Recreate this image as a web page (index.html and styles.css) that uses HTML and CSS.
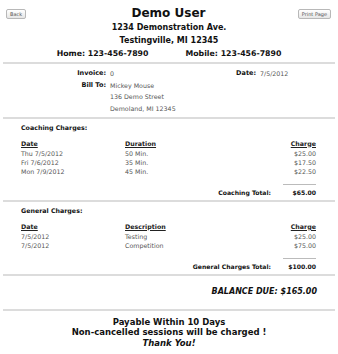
FILE: index.html
```html
<!DOCTYPE html>
<html>
<head>
<meta charset="utf-8">
<link rel="stylesheet" href="styles.css">
</head>
<body>
<div class="page">
  <header class="head">
    <div class="side left"><button class="btn">Back</button></div>
    <h1 class="name">Demo User</h1>
    <div class="side right"><button class="btn">Print Page</button></div>
  </header>
  <div class="addr">
    <div class="line">1234 Demonstration Ave.</div>
    <div class="line">Testingville, MI 12345</div>
    <div class="line phones"><span>Home: 123-456-7890</span><span>Mobile: 123-456-7890</span></div>
  </div>
  <div class="rule"></div>

  <div class="info">
    <div class="lbl">Invoice:</div><div class="val">0</div><div class="lbl2">Date:</div><div class="val">7/5/2012</div>
    <div class="lbl">Bill To:</div><div class="val wide">Mickey Mouse</div>
    <div class="lbl"></div><div class="val wide">136 Demo Street</div>
    <div class="lbl"></div><div class="val wide">Demoland, MI 12345</div>
  </div>
  <div class="rule r2"></div>

  <section class="sec">
    <div class="sec-title">Coaching Charges:</div>
    <div class="row hdr"><span class="c1">Date</span><span class="c2">Duration</span><span class="c3">Charge</span></div>
    <div class="row"><span class="c1">Thu 7/5/2012</span><span class="c2">50 Min.</span><span class="c3">$25.00</span></div>
    <div class="row"><span class="c1">Fri 7/6/2012</span><span class="c2">35 Min.</span><span class="c3">$17.50</span></div>
    <div class="row"><span class="c1">Mon 7/9/2012</span><span class="c2">45 Min.</span><span class="c3">$22.50</span></div>
    <div class="total"><span class="t-lbl">Coaching Total:</span><span class="t-val">$65.00</span></div>
  </section>
  <div class="rule r3"></div>

  <section class="sec">
    <div class="sec-title">General Charges:</div>
    <div class="row hdr"><span class="c1">Date</span><span class="c2">Description</span><span class="c3">Charge</span></div>
    <div class="row"><span class="c1">7/5/2012</span><span class="c2">Testing</span><span class="c3">$25.00</span></div>
    <div class="row"><span class="c1">7/5/2012</span><span class="c2">Competition</span><span class="c3">$75.00</span></div>
    <div class="total"><span class="t-lbl">General Charges Total:</span><span class="t-val">$100.00</span></div>
  </section>
  <div class="rule r3"></div>

  <div class="balance">BALANCE DUE: $165.00</div>
  <div class="rule r4"></div>

  <footer class="foot">
    <div>Payable Within 10 Days</div>
    <div>Non-cancelled sessions will be charged !</div>
    <div class="thanks">Thank You!</div>
  </footer>
</div>
</body>
</html>
```
FILE: styles.css
```css
* { box-sizing: border-box; }
html, body { margin: 0; padding: 0; background: #fff; }
body {
  font-family: "DejaVu Sans", Verdana, sans-serif;
  color: #111;
  width: 338px;
  height: 354px;
  overflow: hidden;
}
.page { width: 338px; }

.head {
  display: grid;
  grid-template-columns: 1fr auto 1fr;
  align-items: start;
  padding: 6px 7px 0 6px;
}
.side { display: flex; padding-top: 3px; }
.side.right { justify-content: flex-end; }
.btn {
  font-family: "DejaVu Sans", Verdana, sans-serif;
  font-size: 5px;
  line-height: 6px;
  color: #555;
  padding: 1px 3px;
  border: 1px solid #b8b8b8;
  border-radius: 2px;
  background: linear-gradient(#ffffff, #e6e6e6);
  margin: 0;
}
.name {
  margin: 0;
  font-size: 12px;
  line-height: 14px;
  font-weight: bold;
  text-align: center;
}
.addr {
  text-align: center;
  font-weight: bold;
  font-size: 8px;
  line-height: 13px;
  margin-top: 1px;
}
.phones { display: flex; justify-content: center; gap: 37px; font-size: 7.8px; }

.rule {
  height: 2px;
  background: #dcdcdc;
  margin: 2px 3px 0 3px;
}
.r2 { margin-top: 3px; }
.r3 { margin-top: 3px; }
.r4 { margin-top: 12px; }

.info {
  display: grid;
  grid-template-columns: 106px 122px 28px auto;
  padding-top: 4px;
  font-size: 6.3px;
  line-height: 11.5px;
}
.lbl { text-align: right; font-weight: bold; font-size: 6.5px; }
.lbl2 { text-align: right; font-weight: bold; font-size: 6.5px; }
.val { color: #555; padding-left: 4px; }
.val.wide { grid-column: 2 / 5; }

.sec { padding: 4px 22px 0 21px; font-size: 6.3px; }
.sec-title { font-weight: bold; line-height: 10px; margin-bottom: 5.5px; }
.row { display: flex; line-height: 9.4px; color: #555; }
.row.hdr { font-weight: bold; color: #222; line-height: 10px; }
.row.hdr span { text-decoration: underline; }
.c1 { width: 104px; }
.c2 { flex: 1; }
.c3 { text-align: right; }
.total {
  display: flex;
  justify-content: flex-end;
  align-items: flex-end;
  margin-top: 7px;
  font-weight: bold;
  font-size: 6.1px;
  line-height: 9.5px;
}
.t-lbl { margin-right: 7px; }
.t-val {
  width: 38px;
  text-align: right;
  padding-top: 4px;
  background: linear-gradient(#bbb, #bbb) right top / 33px 1px no-repeat;
}

.balance {
  text-align: right;
  padding: 11px 21px 0 0;
  font-size: 8px;
  font-weight: bold;
  font-style: italic;
  line-height: 10px;
}

.foot {
  text-align: center;
  font-weight: bold;
  font-size: 8.5px;
  line-height: 10.5px;
  padding-top: 5.5px;
}
.thanks { font-style: italic; }
```
